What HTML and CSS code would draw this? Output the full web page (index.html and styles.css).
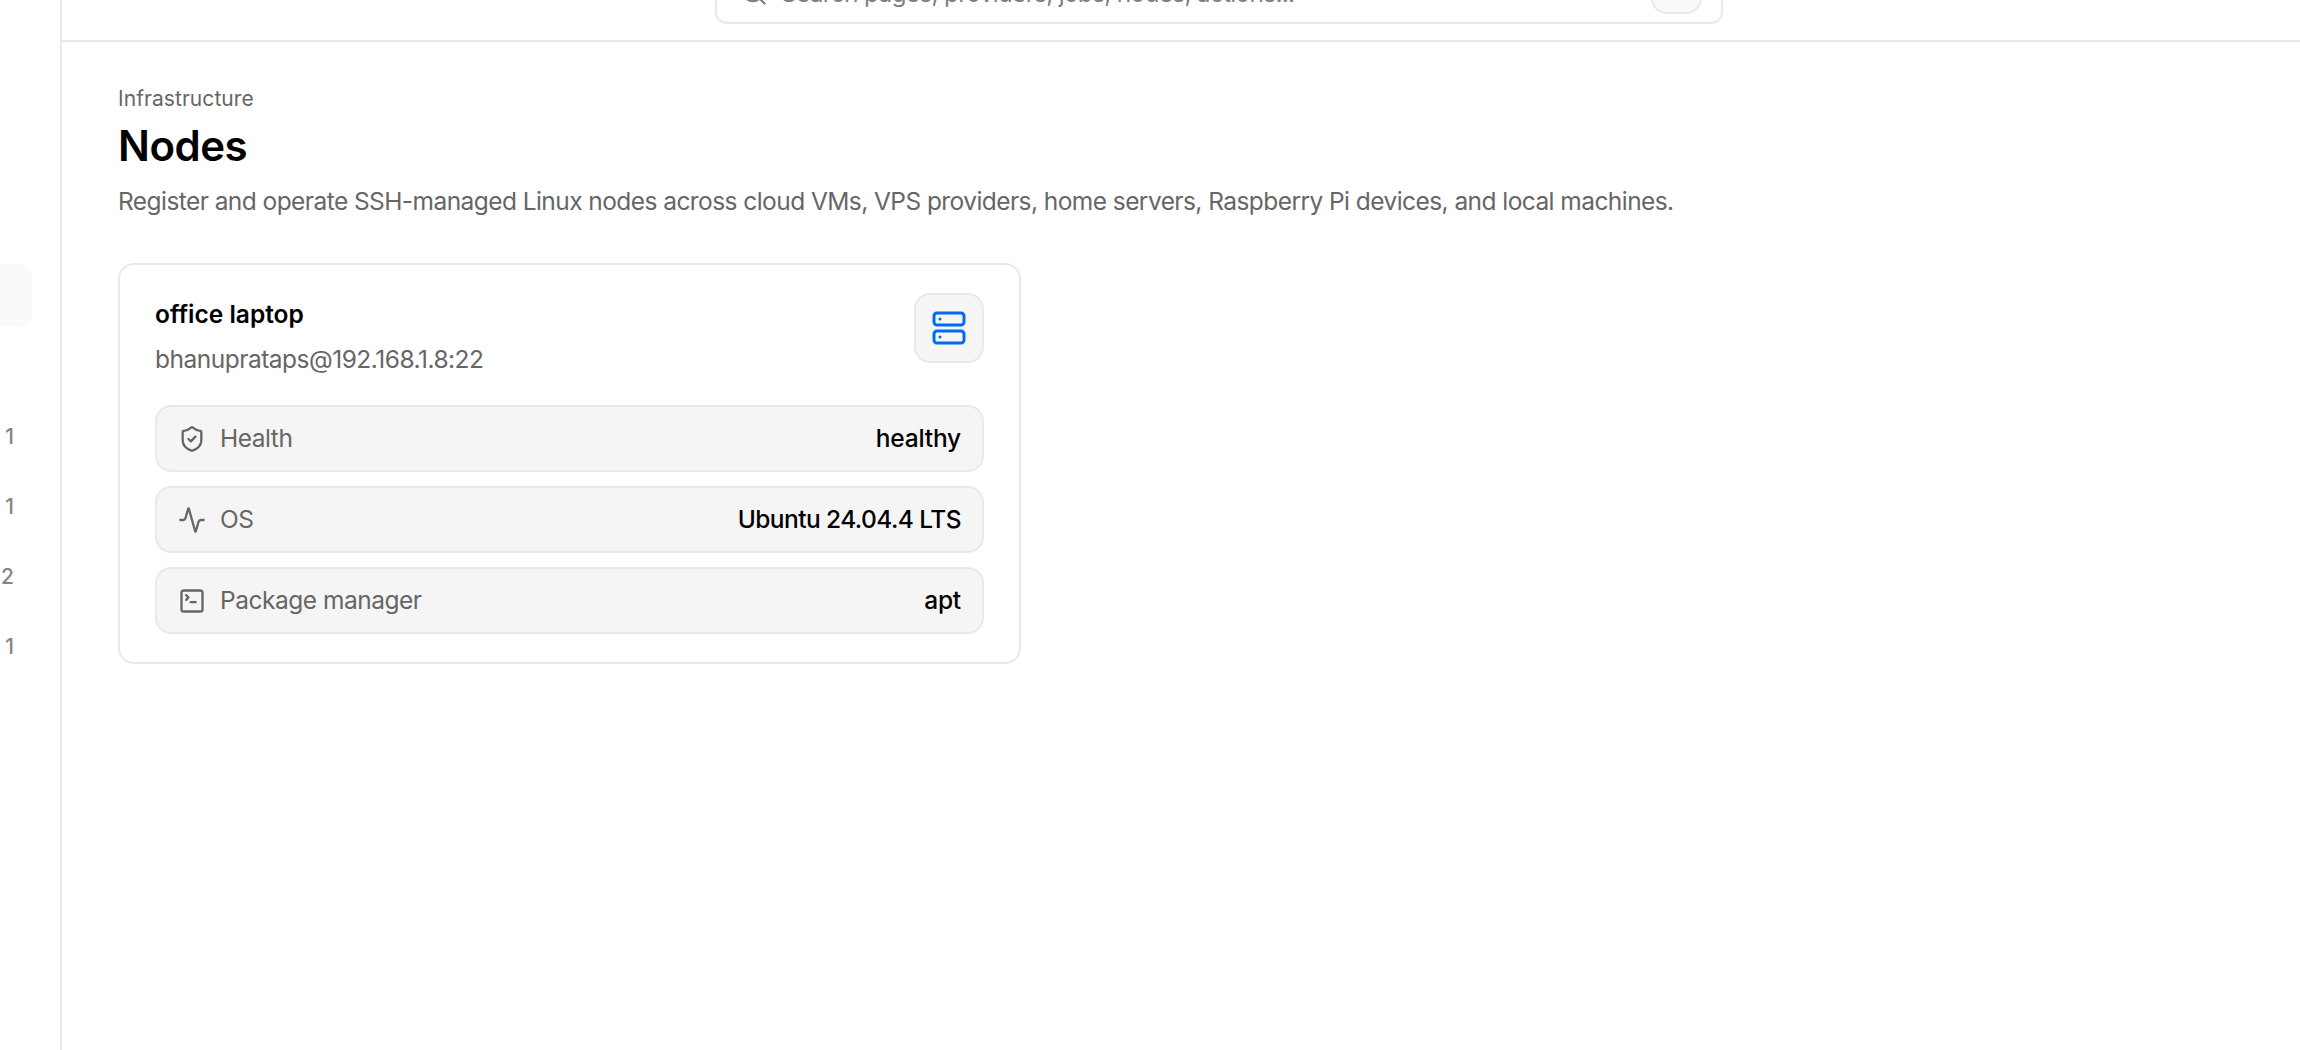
FILE: index.html
```html
<!DOCTYPE html>
<html lang="en">
<head>
    <meta charset="UTF-8">
    <meta name="viewport" content="width=device-width, initial-scale=1.0">
    <title>Nodes</title>
    <link rel="stylesheet" href="styles.css">
</head>
<body>
    <div class="app">
        <aside class="sidebar">
            <div class="nav-item active"></div>
            <div class="nav-counts">
                <div class="nav-count">1</div>
                <div class="nav-count">1</div>
                <div class="nav-count">2</div>
                <div class="nav-count">1</div>
            </div>
        </aside>

        <div class="main">
            <header class="topbar">
                <div class="search">
                    <svg class="search-icon" viewBox="0 0 24 24"><circle cx="11" cy="11" r="8"/><path d="m21 21-4.34-4.34"/></svg>
                    <span class="search-text">Search pages, providers, jobs, nodes, actions...</span>
                    <span class="kbd"></span>
                </div>
            </header>

            <main class="content">
                <p class="eyebrow">Infrastructure</p>
                <h1 class="title">Nodes</h1>
                <p class="description">Register and operate SSH-managed Linux nodes across cloud VMs, VPS providers, home servers, Raspberry Pi devices, and local machines.</p>

                <section class="card">
                    <div class="card-header">
                        <div>
                            <h2 class="node-name">office laptop</h2>
                            <p class="node-host">bhanuprataps@192.168.1.8:22</p>
                        </div>
                        <div class="node-icon">
                            <svg viewBox="0 0 24 24"><rect width="20" height="8" x="2" y="2" rx="2"/><rect width="20" height="8" x="2" y="14" rx="2"/><path d="M6 6h.01M6 18h.01"/></svg>
                        </div>
                    </div>

                    <div class="rows">
                        <div class="row">
                            <svg class="row-icon" viewBox="0 0 24 24"><path d="M20 13c0 5-3.5 7.5-7.66 8.95a1 1 0 0 1-.67-.01C7.5 20.5 4 18 4 13V6a1 1 0 0 1 1-1c2 0 4.5-1.2 6.24-2.72a1.17 1.17 0 0 1 1.52 0C14.51 3.81 17 5 19 5a1 1 0 0 1 1 1z"/><path d="m9 12 2 2 4-4"/></svg>
                            <span class="row-label">Health</span>
                            <span class="row-value short">healthy</span>
                        </div>
                        <div class="row">
                            <svg class="row-icon" viewBox="0 0 24 24"><path d="M22 12h-2.48a2 2 0 0 0-1.93 1.46l-2.35 8.36a.25.25 0 0 1-.48 0L9.24 2.18a.25.25 0 0 0-.48 0l-2.35 8.36A2 2 0 0 1 4.49 12H2"/></svg>
                            <span class="row-label">OS</span>
                            <span class="row-value">Ubuntu 24.04.4 LTS</span>
                        </div>
                        <div class="row">
                            <svg class="row-icon" viewBox="0 0 24 24"><path d="m7 11 2-2-2-2"/><path d="M11 13h4"/><rect width="18" height="18" x="3" y="3" rx="2"/></svg>
                            <span class="row-label">Package manager</span>
                            <span class="row-value short">apt</span>
                        </div>
                    </div>
                </section>
            </main>
        </div>
    </div>
</body>
</html>
```
FILE: styles.css
```css
* { box-sizing: border-box; margin: 0; padding: 0; }
body {
    font-family: Inter, 'Liberation Sans', sans-serif;
    font-size: 24.5px;
    line-height: 35px;
    background-color: #fff;
    color: #000;
    overflow: hidden;
}
svg {
    display: block;
    flex-shrink: 0;
    fill: none;
    stroke: currentColor;
    stroke-width: 2;
    stroke-linecap: round;
    stroke-linejoin: round;
}
p, h1, h2, span {
    white-space: nowrap;
}
.app {
    display: flex;
    height: 1050px;
}
.sidebar {
    width: 62px;
    flex-shrink: 0;
    border-right: 2px solid #e9e9e9;
    padding-top: 264px;
}
.nav-item.active {
    width: 32px;
    height: 63px;
    background-color: #fafafa;
    border-radius: 0 12px 12px 0;
}
.nav-counts {
    margin-top: 74px;
    width: 14px;
}
.nav-count {
    height: 70px;
    display: flex;
    align-items: center;
    justify-content: flex-end;
    color: #858585;
    font-size: 21px;
    font-weight: 500;
}
.main {
    flex: 1;
    min-width: 0;
}
.topbar {
    height: 42px;
    border-bottom: 2px solid #e9e9e9;
    padding: 0 577px 16px 653px;
    display: flex;
    align-items: flex-end;
    overflow: hidden;
}
.search {
    flex: 1;
    height: 62px;
    border: 2px solid #e9e9e9;
    border-radius: 12px;
    padding: 0 19px 0 23px;
    display: flex;
    align-items: center;
    color: #808080;
}
.search-icon {
    width: 28px;
    height: 28px;
    margin-right: 13px;
}
.search-text {
    letter-spacing: -0.75px;
}
.kbd {
    width: 51px;
    height: 42px;
    margin-left: auto;
    border: 2px solid #e9e9e9;
    border-radius: 16px;
    background-color: #f9f9f9;
}
.content {
    padding: 38px 56px;
}
.eyebrow {
    font-size: 21px;
    color: #666;
    line-height: 38px;
    letter-spacing: 0.06px;
}
.title {
    font-size: 42px;
    font-weight: 600;
    line-height: 50px;
    margin-top: 3px;
    letter-spacing: -0.5px;
}
.description {
    color: #666;
    margin-top: 13px;
    letter-spacing: -0.565px;
}
.card {
    width: 903px;
    margin-top: 44px;
    border: 2px solid #e9e9e9;
    border-radius: 16px;
    padding: 28px 35px;
}
.card-header {
    display: flex;
    justify-content: space-between;
    height: 70px;
}
.node-name {
    font-size: 24.5px;
    font-weight: 600;
    margin-top: 4px;
}
.node-host {
    color: #666;
    margin-top: 10px;
    letter-spacing: -0.5px;
}
.node-icon {
    width: 70px;
    height: 70px;
    border: 2px solid #e9e9e9;
    border-radius: 16px;
    background-color: #f5f5f5;
    color: #006bed;
    display: flex;
    align-items: center;
    justify-content: center;
}
.node-icon svg {
    width: 36px;
    height: 36px;
}
.rows {
    display: grid;
    gap: 14px;
    margin-top: 42px;
}
.row {
    height: 67px;
    border: 2px solid #e9e9e9;
    border-radius: 16px;
    background-color: #f5f5f5;
    padding: 0 21px;
    display: flex;
    align-items: center;
    color: #666;
}
.row-icon {
    width: 28px;
    height: 28px;
    margin-right: 14px;
}
.row-label {
    letter-spacing: -0.48px;
}
.row-value {
    margin-left: auto;
    color: #000;
    font-weight: 500;
    letter-spacing: -0.57px;
}
.row-value.short {
    letter-spacing: -0.2px;
}
```
